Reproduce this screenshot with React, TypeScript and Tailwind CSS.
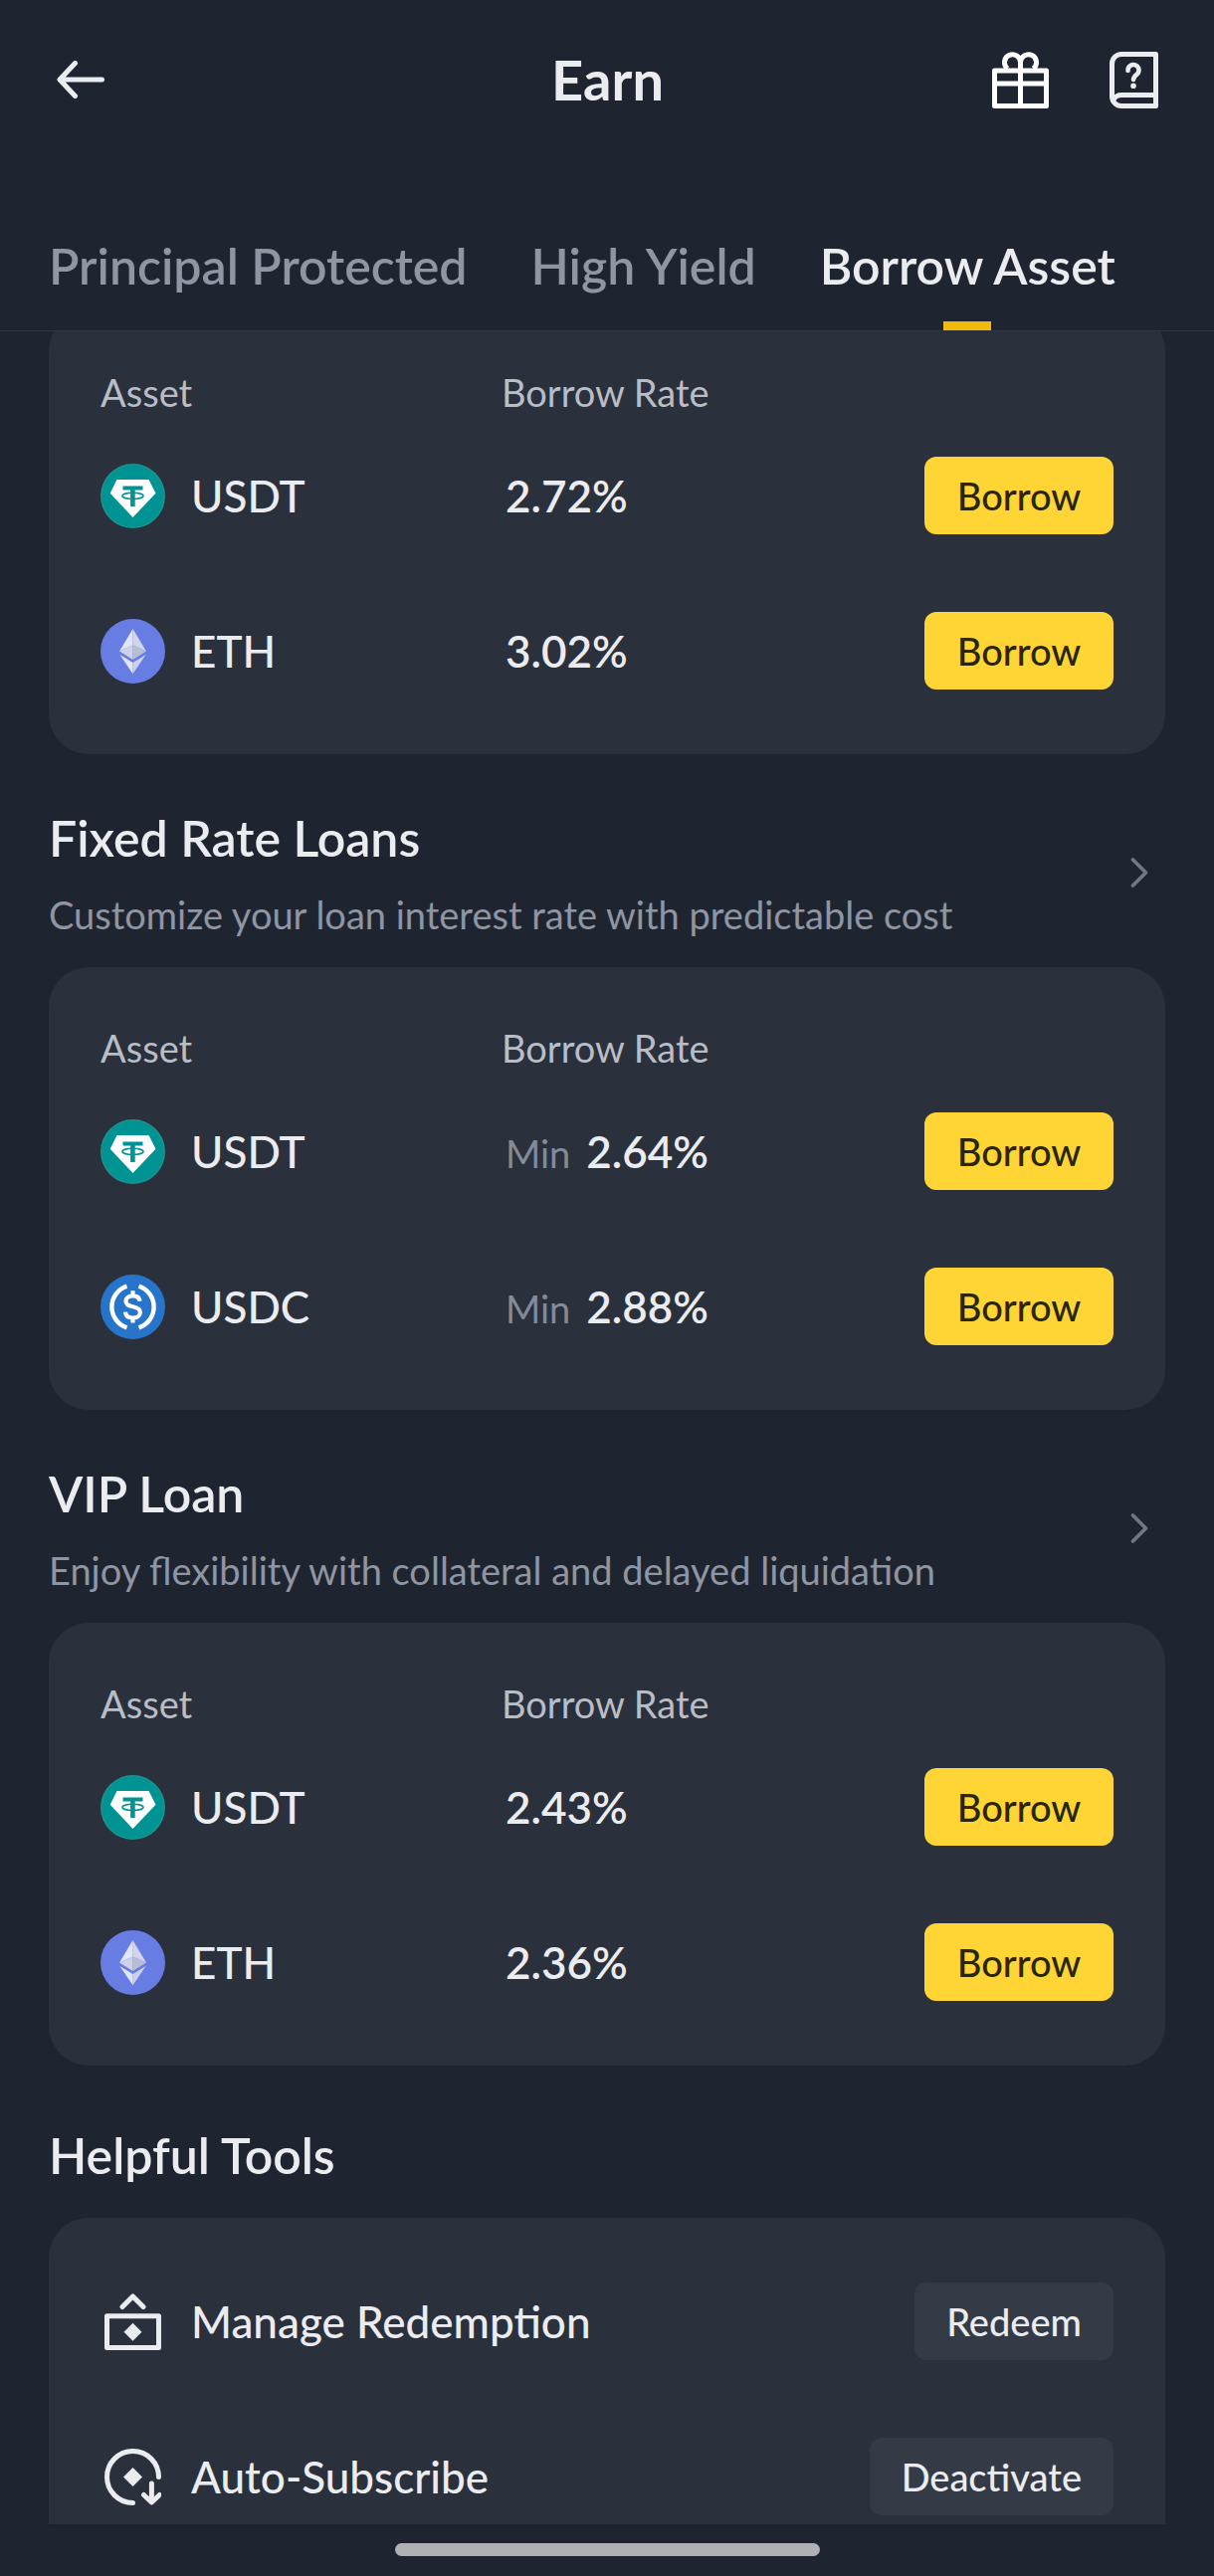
import { useState } from "react";
import type { ReactNode } from "react";

type Coin = "USDT" | "ETH" | "USDC";
type Loan = { coin: Coin; rate: string; min?: boolean };

const FLEXIBLE: Loan[] = [
  { coin: "USDT", rate: "2.72%" },
  { coin: "ETH", rate: "3.02%" },
];
const FIXED: Loan[] = [
  { coin: "USDT", rate: "2.64%", min: true },
  { coin: "USDC", rate: "2.88%", min: true },
];
const VIP: Loan[] = [
  { coin: "USDT", rate: "2.43%" },
  { coin: "ETH", rate: "2.36%" },
];
const TABS = ["Principal Protected", "High Yield", "Borrow Asset"];

function UsdtLogo() {
  return (
    <svg viewBox="0 0 65 65" className="size-[65px] shrink-0" aria-hidden="true">
      <circle cx="32.5" cy="32.5" r="32.5" fill="#1d938c" />
      <circle cx="32.5" cy="32.5" r="31" fill="#009393" />
      <path d="M16.5 16h32l7 13.7L32.5 54 9.7 29.7z" fill="#fff" />
      <path d="M22.5 22.5h20v4h-7.8V43h-4.6V26.5h-7.6z" fill="#009393" />
      <ellipse cx="32.5" cy="32.3" rx="10.6" ry="3.1" fill="none" stroke="#009393" strokeWidth="1.6" />
    </svg>
  );
}

function EthLogo() {
  return (
    <svg viewBox="0 0 65 65" className="size-[65px] shrink-0" aria-hidden="true">
      <circle cx="32.5" cy="32.5" r="32.5" fill="#687de3" />
      <path d="M32.5 10v16.5L19 32.5z" fill="#e1e5f9" />
      <path d="M32.5 10v16.5L46 32.5z" fill="#d0d4ee" />
      <path d="M32.5 26.5v14.6L19 32.5z" fill="#cdd1ea" />
      <path d="M32.5 26.5v14.6L46 32.5z" fill="#b9bdd6" />
      <path d="M19.4 36l13.1 8v11.3z" fill="#e1e5f9" />
      <path d="M45.6 36l-13.1 8v11.3z" fill="#ccd0ec" />
    </svg>
  );
}

function UsdcLogo() {
  return (
    <svg viewBox="0 0 65 65" className="size-[65px] shrink-0" aria-hidden="true">
      <circle cx="32.5" cy="32.5" r="32.5" fill="#2775ca" />
      <g fill="none" stroke="#fff">
        <path d="M26.5 11.6a22 22 0 0 0 0 41.8M38.5 11.6a22 22 0 0 1 0 41.8" strokeWidth="4.4" />
        <path
          d="M39.6 26.8c-.4-3.6-3-5.4-7.1-5.4-4.2 0-7 2-7 5.4 0 3.600 2.800 4.700 7 5.500 4.500.9 7.400 2 7.400 5.700 0 3.600-3.100 5.600-7.400 5.600-4.500 0-7.200-1.900-7.500-5.900M32.500 16.200v5M32.500 43.600v5"
          strokeWidth="4.2"
        />
      </g>
    </svg>
  );
}

function CoinLogo({ coin }: { coin: Coin }) {
  if (coin === "USDT") return <UsdtLogo />;
  if (coin === "ETH") return <EthLogo />;
  return <UsdcLogo />;
}

function BackIcon() {
  return (
    <svg viewBox="0 0 48 38" className="h-[38px] w-12" fill="none" stroke="currentColor" strokeWidth="5" strokeLinecap="round" strokeLinejoin="round" aria-hidden="true">
      <path d="M3 19h42.500M18.500 2.500L3 19l15.500 16.500" />
    </svg>
  );
}

function GiftIcon() {
  return (
    <svg viewBox="0 0 57 57" className="size-[57px]" fill="none" stroke="#fff" strokeWidth="5" strokeLinejoin="round" aria-hidden="true">
      <path d="M2.500 19h52v35.500h-52zM2.500 32h52M28.500 10v44.500" />
      <path d="M28.500 19v-8.500a8 8 0 1 0-13 6.500M28.500 10.500a8 8 0 1 1 13 6.500" />
    </svg>
  );
}

function GuideIcon() {
  return (
    <svg viewBox="0 0 49 57" className="h-[57px] w-[49px]" fill="none" stroke="currentColor" strokeWidth="5" strokeLinejoin="round" strokeLinecap="round" aria-hidden="true">
      <path d="M12 2.500h34.500v52H12A9.500 9.500 0 0 1 2.500 45V12A9.500 9.500 0 0 1 12 2.500z" />
      <path d="M46.500 43.500H12c-3.500 0-6.500 2-8 4.500" />
      <path d="M18.500 19v-.5a5.500 5.500 0 1 1 9.200 4.100c-2.400 2-3.700 3.200-3.700 5.400" strokeWidth="4.600" />
      <circle cx="24" cy="34.200" r="2.800" fill="currentColor" stroke="none" />
    </svg>
  );
}

function ChevronIcon() {
  return (
    <svg viewBox="0 0 18 30" className="h-[30px] w-[18px]" fill="none" stroke="currentColor" strokeWidth="3.600" strokeLinecap="round" strokeLinejoin="round" aria-hidden="true">
      <path d="M2.500 2l13 13-13 13" />
    </svg>
  );
}

function RedeemIcon() {
  return (
    <svg viewBox="0 0 57 57" className="size-[57px]" fill="none" stroke="currentColor" strokeWidth="5" strokeLinecap="round" strokeLinejoin="round" aria-hidden="true">
      <path d="M2.500 22.800h52v31.700h-52zM18 13.500L28.500 3 39 13.500" />
      <path d="M28.500 29.700l9 9-9 9-9-9z" fill="currentColor" stroke="none" />
    </svg>
  );
}

function AutoIcon() {
  return (
    <svg viewBox="0 0 57 57" className="size-[57px]" fill="none" stroke="currentColor" strokeWidth="5" strokeLinecap="round" strokeLinejoin="round" aria-hidden="true">
      <path d="M28.500 54.500a26 26 0 1 1 26-26" />
      <path d="M47.400 35v18.500M39.500 46.500l7.900 7.500 7.900-7.500" />
      <path d="M28.500 19l9.500 9.500-9.500 9.500-9.500-9.500z" fill="currentColor" stroke="none" />
    </svg>
  );
}

function LoanCard({ loans }: { loans: Loan[] }) {
  return (
    <div className="rounded-[40px] bg-[#2a303c] px-[52px] pt-14 pb-[26px]">
      <table className="w-full table-fixed border-collapse text-left">
        <thead>
          <tr className="h-[51px] text-[38px] leading-[51px] text-[#b9bdc6]">
            <th className="w-[403px] font-normal">Asset</th>
            <th className="font-normal whitespace-nowrap">Borrow Rate</th>
            <th className="w-[190px]">
              <span className="sr-only">Action</span>
            </th>
          </tr>
        </thead>
        <tbody>
          {loans.map((loan) => (
            <tr key={loan.coin} className="h-[156px]">
              <td>
                <div className="flex items-center gap-[26px]">
                  <CoinLogo coin={loan.coin} />
                  <span className="text-[44px] leading-[60px] font-medium">{loan.coin}</span>
                </div>
              </td>
              <td>
                <div className="flex items-baseline gap-4 pl-1 whitespace-nowrap">
                  {loan.min && <span className="text-[38px] text-[#848b98]">Min</span>}
                  <span className="text-[44px] leading-[60px] font-semibold">{loan.rate}</span>
                </div>
              </td>
              <td>
                <button
                  type="button"
                  className="block h-[78px] w-full rounded-xl bg-[#ffd535] text-[38px] font-medium text-[#28260f]"
                >
                  Borrow
                </button>
              </td>
            </tr>
          ))}
        </tbody>
      </table>
    </div>
  );
}

function LoanSection({ title, note, loans }: { title: string; note: string; loans: Loan[] }) {
  return (
    <section>
      <a href="#" className="flex items-center justify-between pt-[52px] pr-[17px] pb-7">
        <div className="flex flex-col gap-5">
          <h2 className="text-[50px] leading-[64px] font-semibold">{title}</h2>
          <p className="text-[38px] leading-[50px] whitespace-nowrap text-[#8f95a2]">{note}</p>
        </div>
        <span className="text-[#707886]">
          <ChevronIcon />
        </span>
      </a>
      <LoanCard loans={loans} />
    </section>
  );
}

function ToolRow({ icon, label, action }: { icon: ReactNode; label: string; action: string }) {
  return (
    <li className="flex h-[156px] items-center">
      <span className="mr-[26px] flex w-[65px] justify-center">{icon}</span>
      <span className="flex-1 text-[44px] leading-[60px] font-medium">{label}</span>
      <button type="button" className="h-[78px] rounded-xl bg-[#343a46] px-8 text-[38px] font-medium">
        {action}
      </button>
    </li>
  );
}

export default function App() {
  const [active, setActive] = useState("Borrow Asset");
  return (
    <div className="flex h-screen flex-col overflow-hidden bg-[#1f2530] font-['Lato',sans-serif] text-[#eaecef]">
      <header className="grid h-40 shrink-0 grid-cols-3 items-center pr-14 pl-[57px]">
        <button type="button" aria-label="Back" className="justify-self-start">
          <BackIcon />
        </button>
        <h1 className="text-center text-[56px] leading-[72px] font-bold">Earn</h1>
        <div className="flex items-center gap-[61px] justify-self-end">
          <button type="button" aria-label="Rewards">
            <GiftIcon />
          </button>
          <button type="button" aria-label="Guide">
            <GuideIcon />
          </button>
        </div>
      </header>

      <nav className="flex shrink-0 gap-16 overflow-hidden border-b border-[#2f3642] pl-[49px]">
        {TABS.map((tab) => (
          <button
            key={tab}
            type="button"
            onClick={() => setActive(tab)}
            aria-current={tab === active ? "page" : undefined}
            className={
              tab === active
                ? "relative pt-[75px] pb-[33px] text-[50px] leading-[64px] font-semibold whitespace-nowrap"
                : "relative pt-[75px] pb-[33px] text-[50px] leading-[64px] font-semibold whitespace-nowrap text-[#8f95a2]"
            }
          >
            {tab}
            {tab === active && (
              <span className="absolute bottom-0 left-1/2 h-[9px] w-12 -translate-x-1/2 bg-[#f0b90b]" />
            )}
          </button>
        ))}
      </nav>

      <main className="min-h-0 flex-1 overflow-y-auto px-[49px] [scrollbar-width:none]">
        <div className="-mt-5">
          <LoanCard loans={FLEXIBLE} />
        </div>
        <LoanSection title="Fixed Rate Loans" note="Customize your loan interest rate with predictable cost" loans={FIXED} />
        <LoanSection title="VIP Loan" note="Enjoy flexibility with collateral and delayed liquidation" loans={VIP} />
        <section>
          <h2 className="pt-[58px] pb-[31px] text-[50px] leading-[64px] font-semibold">Helpful Tools</h2>
          <ul className="rounded-[40px] bg-[#2a303c] px-[52px] py-[26px]">
            <ToolRow icon={<RedeemIcon />} label="Manage Redemption" action="Redeem" />
            <ToolRow icon={<AutoIcon />} label="Auto-Subscribe" action="Deactivate" />
          </ul>
        </section>
      </main>

      <footer className="flex h-[52px] shrink-0 justify-center pt-[19px]">
        <div className="h-[13px] w-[427px] rounded-full bg-[#b0b1b5]" />
      </footer>
    </div>
  );
}
